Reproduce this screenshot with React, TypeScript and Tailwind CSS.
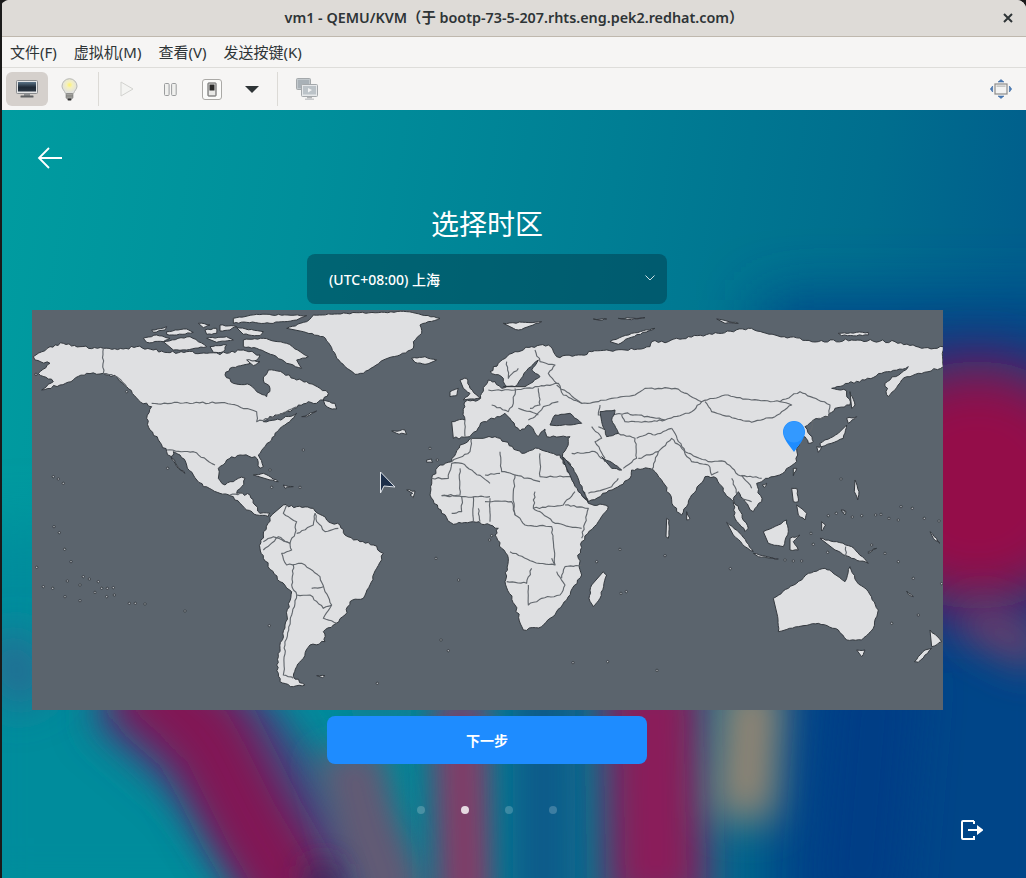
// App.tsx
import type { ReactNode } from "react";

const font = "font-['Noto_Sans','Noto_Sans_CJK_SC',sans-serif]";

// outlines are in 3x crop units, west part first, east part shifted by 1365
const westLand = [
  "10 155 60 125 100 115 150 125 220 130 280 132 320 125 370 135 420 143 470 140 530 145 590 145 640 135 690 150 680 165 640 180 600 190 585 210 610 235 660 240 690 265 710 275 720 250 700 225 715 195 760 205 800 225 830 230 870 250 895 265 880 285 860 295 835 290 805 300 780 320 735 330 700 350 735 345 760 340 800 325 780 350 750 370 735 385 725 405 700 430 685 450 700 485 690 490 675 455 630 450 590 465 565 490 565 520 585 540 610 530 625 520 645 520 635 545 620 565 660 570 675 600 690 625 720 625 715 635 680 630 650 615 610 575 570 565 520 545 490 510 470 480 450 450 430 440 425 460 465 505 440 485 410 440 385 405 360 375 350 340 365 305 325 285 290 245 260 215 220 205 170 205 130 225 90 240 35 255 70 230 25 205 60 175 15 165",
  "770 70 830 50 850 30 950 25 1130 20 1230 40 1170 60 1175 85 1150 110 1150 130 1110 150 1060 165 1000 205 975 208 945 185 920 160 900 120 880 95 820 80",
  "760 600 800 605 850 610 890 645 930 660 945 690 990 710 1030 720 1060 745 1040 790 1020 840 1000 880 960 890 945 930 910 960 880 980 885 1010 840 1020 820 1060 800 1085 790 1115 825 1140 790 1145 750 1130 740 1080 750 1030 765 960 785 860 750 830 700 760 690 730 700 690 725 630",
  "340 100 380 90 420 100 400 110 350 112", "365 75 410 65 405 75 370 82", "410 80 470 72 490 82 440 90 410 88",
  "400 110 480 95 530 125 470 135 430 135", "505 55 540 60 520 68", "525 75 560 70 560 85 530 88", "570 60 620 65 600 75 570 78",
  "610 40 680 28 830 32 800 45 720 55 650 52 610 55", "620 68 700 80 690 92 640 88", "530 100 590 95 610 105 560 112",
  "540 125 590 120 580 140 550 142", "640 105 700 100 770 115 835 155 800 165 815 190 770 175 730 150 680 130 640 125",
  "650 165 690 170 670 182", "880 285 915 295 920 312 900 310 885 300", "815 335 860 318 830 335", "1145 160 1185 155 1220 165 1185 178 1155 172",
  "1290 225 1310 220 1320 250 1350 280 1300 285 1320 265 1300 250", "1260 260 1285 250 1280 272 1260 275",
  "670 510 700 505 745 530 720 525", "760 540 790 545 765 550", "1190 465 1205 462 1208 472 1190 472", "1130 555 1155 558 1150 578 1140 570 1148 565",
  "860 1112 885 1112 878 1118", "1085 378 1125 375 1130 388 1100 385",
];

const eastLand = [
  "-40 400 -75 420 -100 470 -135 480 -160 520 -165 570 -130 625 -95 658 -35 650 15 660 40 670 30 690 50 730 70 760 60 830 90 900 115 975 170 965 210 930 245 885 290 810 280 760 290 710 340 650 370 605 310 595 280 550 245 490 225 450 160 430 110 445 60 410 30 395 -5 400",
  "-100 350 -60 345 -65 320 -60 290 -20 285 -10 265 10 225 30 230 50 250 65 245 55 220 15 200 40 175 90 140 140 125 190 120 215 155 290 150 320 140 420 135 495 125 500 110 550 110 610 95 700 85 790 70 870 90 1000 110 1100 105 1230 110 1310 130 1375 125 1375 185 1300 205 1250 225 1210 275 1200 235 1270 185 1190 205 1140 225 1090 235 1040 250 1085 258 1095 300 1050 310 1030 335 985 345 960 365 975 390 985 410 970 415 960 395 945 405 935 430 935 470 900 500 850 520 830 530 815 535 830 590 805 620 780 590 760 560 745 580 790 670 780 680 750 640 745 590 720 565 695 520 660 515 620 570 590 630 575 620 540 540 510 500 490 490 440 495 435 520 390 550 310 590 250 470 232 455 250 410 255 395 185 395 180 372 160 395 130 360 105 378 60 325 35 335 5 350 -5 350 -45 395 -95 400",
  "55 55 170 50 100 75 85 70", "375 110 440 85 510 70 430 100 400 118", "325 42 365 42 345 46", "400 40 480 38 440 44", "695 42 760 55 720 55", "1060 85 1150 82 1150 90 1070 92",
  "1095 260 1110 300 1100 310", "1085 340 1115 335 1090 355", "1085 360 1075 400 1010 425 1005 415 1060 385", "995 425 1010 425 1000 442",
  "925 490 935 490 925 512", "832 540 845 535 838 548", "920 550 935 550 940 590 925 590", "935 600 965 625 960 645 940 630",
  "835 680 880 660 905 645 910 680 895 725 850 715", "725 652 770 690 805 740 780 725 745 690", "805 745 880 762 820 755",
  "915 700 945 690 925 710 940 735 915 735", "1005 700 1055 710 1100 725 1150 775 1100 760 1050 735",
  "865 880 910 850 950 825 970 805 1020 790 1040 800 1080 830 1095 785 1115 830 1150 860 1180 915 1165 970 1130 1005 1085 1005 1060 975 1000 955 940 965 880 980 878 935",
  "1115 1035 1140 1035 1130 1055", "1335 975 1370 1010 1340 1025", "1340 1030 1300 1072 1288 1070 1320 1035",
  "355 800 365 810 345 880 325 905 312 880 320 840", "605 620 615 640 605 645", "545 640 552 645 550 700 543 695",
  "1110 525 1122 560 1118 585 1108 560", "1335 680 1365 715 1345 700", "1265 858 1285 875 1270 868", "1150 740 1175 730 1150 745",
  "1010 650 1022 660 1010 678", "1068 615 1082 618 1080 630",
];

const seas = [
  "195 360 210 330 255 325 290 355 250 360 215 362",
  "345 320 390 315 380 345 400 385 365 395 350 350",
  "55 245 90 245 130 190 160 165 140 195 165 215 120 245",
  "350 455 390 480 410 495 380 490",
  "232 455 265 490 310 590 280 560 245 490",
];

const westBorders = [
  "220 130 220 205 260 215 290 245", "365 295 585 293 680 320 680 350 735 335 770 320 800 305", "410 435 490 440 530 465 555 480",
  "600 570 640 565", "770 600 760 625 800 650 795 685 780 715 730 695 700 710", "855 625 860 650 885 680 925 670", "800 685 850 660 855 625",
  "700 735 745 695 780 715", "780 715 785 735 755 745 770 780 815 775 870 815 885 860 905 900 880 940 920 955", "790 780 785 840 800 870",
  "800 870 840 870 880 910 905 900", "845 850 880 845", "800 870 785 930 765 1020 760 1110 790 1120",
];

const eastBorders = [
  "-160 520 -110 520 -100 475 -70 475 15 535", "-75 490 -75 570 -130 572", "-40 400 -45 440 -100 470", "-130 572 -70 575 -30 575 15 575",
  "-70 575 -70 620 -100 625", "-35 575 -35 650", "-20 610 -15 650", "15 580 15 650", "45 440 50 500 90 510 85 560 90 630 105 640",
  "165 445 165 515 255 515", "90 510 165 530", "0 510 45 505", "0 590 80 590 90 630", "150 560 145 610 165 620 210 655 290 670",
  "270 560 235 600 145 610", "240 600 310 610 290 700", "105 640 120 660 200 665 205 710 210 780", "75 740 145 770 210 780 200 760",
  "65 830 125 835 140 790", "130 840 130 900 170 880 225 870 240 840 215 800", "290 780 240 785 230 820",
  "10 255 90 255 160 245 220 235 235 270 290 295", "90 250 85 295 70 320 20 300", "160 250 165 300 135 310", "65 170 70 220 100 190",
  "150 135 165 170 210 180 190 205 215 235", "220 290 175 305 150 335 130 345", "100 310 160 330", "-60 345 -60 395",
  "215 240 290 295 340 290 380 280 450 270 480 250 570 250 650 290 720 270 800 285 885 290 945 260 1000 285 1035 300 1030 335 1000 340",
  "660 290 680 320 750 340 800 352 870 335 920 300 885 290", "345 300 340 330 420 325 460 330 540 345 620 320 650 290",
  "320 365 350 400 330 410 360 460", "340 365 400 385 450 400 455 460 415 490", "410 330 420 350 500 350 540 345",
  "455 400 490 385 510 390 560 370", "500 495 520 440 560 400 590 430 620 470 670 480", "520 440 460 460", "260 445 330 440 360 470",
  "310 565 380 545 400 520", "560 370 600 440 670 470 720 470 760 510 830 520", "670 480 680 510 700 500", "740 520 760 580 800 590", "770 510 800 550",
  "985 345 975 380", "1082 725 1082 760",
];

const westDots = [
  [70, 515], [85, 522], [100, 535], [72, 665], [88, 683], [104, 733], [123, 770], [20, 787], [112, 828], [40, 845], [68, 850], [105, 875], [150, 887],
  [160, 815], [178, 822], [205, 830], [150, 840], [195, 862], [215, 850], [232, 850], [250, 848], [230, 875], [253, 870], [298, 895], [316, 895], [345, 897],
  [465, 918], [413, 490], [290, 260], [718, 962], [820, 435], [1200, 430], [1222, 465], [1218, 760], [1286, 825], [1233, 1005], [1255, 1037], [1042, 1135],
  [18, 208], [725, 547], [810, 547], [720, 495],
];

const eastDots = [
  [20, 692], [14, 705], [405, 733], [335, 770], [540, 752], [736, 791], [408, 865], [424, 860], [264, 1073], [368, 1070], [516, 1096], [1068, 522],
  [1030, 632], [1054, 625], [1075, 620], [1102, 636], [1130, 632], [1172, 630], [1188, 628], [1212, 640], [1240, 645], [1248, 605], [1282, 610], [1318, 640],
  [1362, 648], [1285, 820], [1370, 836], [1300, 930], [1220, 955], [978, 685], [985, 718], [1028, 742], [1160, 720], [1200, 745], [1240, 770], [900, 765], [925, 768], [950, 768],
];

// breaks long edges into short ragged steps so coasts don't look ruled
function rough(points: string, amp: number) {
  const n = points.split(" ").map(Number);
  const out: number[] = [];
  for (let i = 0; i + 3 < n.length; i += 2) {
    const [x0, y0, x1, y1] = [n[i], n[i + 1], n[i + 2], n[i + 3]];
    const len = Math.hypot(x1 - x0, y1 - y0);
    const steps = Math.max(1, Math.ceil(len / 10));
    out.push(x0, y0);
    for (let s = 1; s < steps; s++) {
      const t = s / steps;
      const px = x0 + (x1 - x0) * t;
      const py = y0 + (y1 - y0) * t;
      const h = Math.sin(px * 12.9898 + py * 78.233) * 43758.5453;
      const r = (h - Math.floor(h) - 0.5) * 2 * amp;
      out.push(px + (-(y1 - y0) / len) * r, py + ((x1 - x0) / len) * r);
    }
  }
  out.push(n[n.length - 2], n[n.length - 1]);
  return out.map((v) => v.toFixed(1)).join(" ");
}

function Land({ shapes, borders, dots }: { shapes: string[]; borders: string[]; dots: number[][] }) {
  return (
    <>
      {shapes.map((p) => (
        <polygon key={p} points={rough(p, p.length > 200 ? 4 : 2)} fill="#dfe0e2" stroke="#33383e" strokeWidth="3" strokeLinejoin="round" />
      ))}
      {borders.map((p) => (
        <polyline key={p} points={rough(p, 2.5)} fill="none" stroke="#62676d" strokeWidth="3.4" strokeLinejoin="round" />
      ))}
      {dots.map(([x, y]) => (
        <circle key={`${x}-${y}`} cx={x} cy={y} r="3.5" fill="#b9bdc2" stroke="#2c3137" strokeWidth="2.5" />
      ))}
    </>
  );
}

function WorldMap() {
  return (
    <svg viewBox="0 0 911 400" className="block h-[400px] w-[911px] shrink-0">
      <defs>
        <filter id="soft" filterUnits="userSpaceOnUse" x="-100" y="-100" width="4000" height="1600">
          <feGaussianBlur stdDeviation="0.9" />
        </filter>
        <clipPath id="mapClip">
          <rect width="911" height="400" />
        </clipPath>
      </defs>
      <rect width="911" height="400" fill="#5b646d" />
      <g clipPath="url(#mapClip)">
        <g transform="translate(-2 -5) scale(0.33333)" filter="url(#soft)">
          <Land shapes={westLand} borders={westBorders} dots={westDots} />
          <g transform="translate(1365 0)">
            <Land shapes={eastLand} borders={eastBorders} dots={eastDots} />
            {seas.map((p) => (
              <polygon key={p} points={rough(p, 2)} fill="#5b646d" stroke="#33383e" strokeWidth="3" strokeLinejoin="round" />
            ))}
          </g>
        </g>
        {/* pin */}
        <path d="M762 142 C768 134 773 128 773 122 A11 11 0 0 0 751 122 C751 128 756 134 762 142 Z" fill="#1e8cff" />
        <circle cx="762" cy="122" r="10.5" fill="#3399ff" />
        {/* pointer */}
        <path d="M348.5 162 L363 177 L352 176 L348.5 183 Z" fill="#1d2f4a" stroke="#dfe3e8" strokeWidth="1" strokeLinejoin="round" />
      </g>
    </svg>
  );
}

function Wallpaper() {
  return (
    <svg viewBox="0 0 1024 768" preserveAspectRatio="none" className="absolute inset-0 h-full w-full">
      <defs>
        <linearGradient id="sky" x1="0" y1="0" x2="1" y2="0.12">
          <stop offset="0" stopColor="#009ca0" />
          <stop offset="0.3" stopColor="#008f9b" />
          <stop offset="0.6" stopColor="#007e94" />
          <stop offset="0.85" stopColor="#006e8e" />
          <stop offset="1" stopColor="#005f8c" />
        </linearGradient>
        <filter id="b8" filterUnits="userSpaceOnUse" x="-200" y="-200" width="1500" height="1200"><feGaussianBlur stdDeviation="15" /></filter>
        <filter id="b14" filterUnits="userSpaceOnUse" x="-200" y="-200" width="1500" height="1200"><feGaussianBlur stdDeviation="20" /></filter>
        <filter id="b30" filterUnits="userSpaceOnUse" x="-200" y="-200" width="1500" height="1200"><feGaussianBlur stdDeviation="30" /></filter>
      </defs>
      <rect width="1024" height="768" fill="url(#sky)" />
      <rect x="-40" y="420" width="400" height="380" fill="#008c9c" filter="url(#b30)" />
      <rect x="760" y="190" width="320" height="640" fill="#004488" filter="url(#b30)" />
      <circle cx="975" cy="375" r="125" fill="#940848" filter="url(#b30)" />
      <path d="M965 505 L1040 545" stroke="#7a4068" strokeWidth="34" filter="url(#b14)" />
      <g fill="none" strokeLinecap="butt">
        <path d="M0 530 L30 590" stroke="#2a6a92" strokeWidth="50" filter="url(#b14)" />
        <path d="M130 560 L225 640 L340 800" stroke="#3d4a80" strokeWidth="130" filter="url(#b14)" />
        <path d="M130 560 L205 625 L250 715 L300 800" stroke="#821555" strokeWidth="84" filter="url(#b14)" />
        <path d="M345 640 L365 720 L395 800" stroke="#625a74" strokeWidth="66" filter="url(#b8)" />
        <path d="M318 755 L326 800" stroke="#3a2a58" strokeWidth="30" filter="url(#b8)" />
        <path d="M458 590 L464 800" stroke="#823c68" strokeWidth="56" filter="url(#b8)" />
        <path d="M370 560 L385 615" stroke="#0f8094" strokeWidth="60" filter="url(#b8)" />
        <path d="M542 570 L542 800" stroke="#0a5c8a" strokeWidth="62" filter="url(#b8)" />
        <path d="M650 560 L655 800" stroke="#8a1a5a" strokeWidth="100" filter="url(#b14)" />
        <path d="M752 570 L742 710" stroke="#988672" strokeWidth="60" filter="url(#b14)" />
        <path d="M875 560 L855 800" stroke="#023c86" strokeWidth="90" filter="url(#b14)" />
      </g>
    </svg>
  );
}

function Slot({ w, children }: { w: string; children: ReactNode }) {
  return <div className={`flex h-full shrink-0 items-center justify-center ${w}`}>{children}</div>;
}

function Separator() {
  return <div className="mx-0 h-[34px] w-px shrink-0 bg-[#dcdad6]" />;
}

function Toolbar() {
  return (
    <div className="flex h-[42px] shrink-0 items-center bg-[#f6f5f4] pl-1">
      <div className="flex h-[34px] w-[42px] shrink-0 items-center justify-center rounded-[6px] bg-[#d5d0cc]">
        <svg width="22" height="18" viewBox="0 0 22 18">
          <defs>
            <linearGradient id="scr" x1="0" y1="0" x2="0" y2="1">
              <stop offset="0" stopColor="#5b7488" />
              <stop offset="0.55" stopColor="#1f2a36" />
              <stop offset="1" stopColor="#2b3642" />
            </linearGradient>
          </defs>
          <rect x="0.5" y="0.5" width="21" height="13" rx="1" fill="#e4e5e6" stroke="#8a8c8e" />
          <rect x="2" y="2" width="18" height="9.5" fill="url(#scr)" />
          <rect x="8" y="14" width="6" height="2" fill="#8d8f91" />
          <rect x="4.5" y="15.5" width="13" height="2" rx="0.5" fill="#5f6163" />
        </svg>
      </div>
      <Slot w="w-[42px]">
        <svg width="17" height="23" viewBox="0 0 17 23">
          <defs>
            <radialGradient id="glow" cx="0.5" cy="0.42" r="0.5">
              <stop offset="0" stopColor="#fff36a" />
              <stop offset="0.4" stopColor="#f4f0c0" />
              <stop offset="1" stopColor="#e2e2de" />
            </radialGradient>
          </defs>
          <path d="M8.5 .7 A7.6 7.6 0 0 1 16 8.2 C16 11 13.6 12.5 12.5 15.5 L4.5 15.5 C3.4 12.5 1 11 1 8.2 A7.6 7.6 0 0 1 8.5 .7 Z" fill="url(#glow)" stroke="#b5b6b1" />
          <rect x="5" y="15.5" width="7" height="5" rx="1" fill="#b0b0ac" stroke="#777" strokeWidth=".6" />
          <path d="M5 17.2 H12 M5 18.9 H12" stroke="#6e6e6c" strokeWidth=".7" />
          <rect x="6.5" y="20.6" width="4" height="2" rx=".8" fill="#2f2f2f" />
        </svg>
      </Slot>
      <Slot w="w-[8px]"><span /></Slot>
      <Separator />
      <Slot w="w-[56px]">
        <svg width="14" height="16" viewBox="0 0 14 16">
          <path d="M1 1 L13 8 L1 15 Z" fill="#f4f4f2" stroke="#d2d2cf" />
        </svg>
      </Slot>
      <Slot w="w-[30px]">
        <svg width="13" height="13" viewBox="0 0 13 13">
          <rect x=".5" y=".5" width="4.6" height="12" rx="1" fill="#f0f0ee" stroke="#9b9d9e" />
          <rect x="7.6" y=".5" width="4.6" height="12" rx="1" fill="#f0f0ee" stroke="#9b9d9e" />
        </svg>
      </Slot>
      <Slot w="w-[54px]">
        <svg width="20" height="21" viewBox="0 0 20 21">
          <rect x=".5" y=".5" width="19" height="20" rx="2.5" fill="#fbfbfa" stroke="#aaa9a6" />
          <rect x="6" y="4" width="8" height="13" rx=".5" fill="#e9e9e7" stroke="#555" />
          <rect x="7.5" y="5.5" width="5" height="6" fill="#2a2a2a" />
        </svg>
      </Slot>
      <Slot w="w-[26px]">
        <svg width="14" height="7" viewBox="0 0 14 7">
          <path d="M0 0 H14 L7 7 Z" fill="#2e3436" />
        </svg>
      </Slot>
      <Slot w="w-[12px]"><span /></Slot>
      <Separator />
      <Slot w="w-[58px]">
        <svg width="22" height="22" viewBox="0 0 22 22">
          <rect x=".5" y=".5" width="14" height="11" rx="1" fill="#c2c8cc" stroke="#a4a8ab" />
          <rect x="2" y="2" width="11" height="8" fill="#a9b1b7" />
          <rect x="5.5" y="6.5" width="16" height="12" rx="1" fill="#e6e8ea" stroke="#a4a8ab" />
          <rect x="7" y="8" width="13" height="8.5" fill="#bcc3c8" />
          <path d="M12 10 L16 12 L12 14.5 Z" fill="#f2f3f4" />
          <rect x="11" y="19" width="5" height="1.5" fill="#b2b4b6" />
          <rect x="9" y="20.5" width="9" height="1.5" fill="#c8cacc" />
        </svg>
      </Slot>
      <div className="flex-1" />
      <div className="mr-[14px] flex h-full items-center">
        <svg width="22" height="20" viewBox="0 0 22 20">
          <g fill="#4f7fb8" stroke="#2f5f9c" strokeWidth=".5">
            <path d="M8 3 L11 .5 L14 3 Z" />
            <path d="M8 17 L11 19.5 L14 17 Z" />
            <path d="M2.6 7 L.3 10 L2.6 13 Z" />
            <path d="M19.4 7 L21.7 10 L19.4 13 Z" />
          </g>
          <rect x="5" y="5" width="12" height="10" fill="#f3f3f2" stroke="#8c8c8a" strokeWidth="1.2" />
          <rect x="6.5" y="6.5" width="9" height="1.3" fill="#bcbcba" />
        </svg>
      </div>
    </div>
  );
}

export default function App() {
  return (
    <div className={`flex h-[878px] w-[1026px] overflow-hidden bg-[#1a1a1a] ${font}`}>
      <div className="flex w-full flex-col overflow-hidden rounded-t-[9px] bg-[#f6f5f4] pl-[2px] [background-clip:content-box]">
        {/* title bar */}
        <div className="relative flex h-[37px] shrink-0 items-center justify-center border-b border-[#bfb8ae] bg-[#dedbd7] text-[14.35px] font-semibold text-[#2e3436]">
          vm1 - QEMU/KVM（于 bootp-73-5-207.rhts.eng.pek2.redhat.com）
          <svg width="10" height="10" viewBox="0 0 10 10" className="absolute right-[13px] top-[13px]">
            <path d="M1 1 L9 9 M9 1 L1 9" stroke="#2e3436" strokeWidth="2" />
          </svg>
        </div>
        {/* menu bar */}
        <div className="flex h-[31px] shrink-0 items-center gap-[17px] border-b border-[#deddda] pl-2 text-[15px] text-[#2e3436]">
          <span>文件(F)</span>
          <span>虚拟机(M)</span>
          <span>查看(V)</span>
          <span>发送按键(K)</span>
        </div>
        <Toolbar />
        {/* guest screen */}
        <div className="relative flex flex-1 flex-col overflow-hidden">
          <Wallpaper />
          <div className="relative flex w-[970px] flex-1 flex-col items-center">
            <div className="flex h-[97px] w-full items-center pl-[34px] pt-[0px]">
              <svg width="28" height="24" viewBox="0 0 28 24" className="mt-[-1px]">
                <path d="M26 12 H3 M13 2 L3 12 L13 22" fill="none" stroke="#fff" strokeWidth="1.8" />
              </svg>
            </div>
            <h1 className="text-[28px] font-normal leading-[34px] text-white">选择时区</h1>
            <div className="mt-[13px] flex h-[50px] w-[360px] shrink-0 items-center justify-between rounded-[8px] bg-[#003c4c]/50 pl-[22px] pr-[12px] text-[14px] font-medium text-white">
              <span>(UTC+08:00) 上海</span>
              <svg width="10" height="6" viewBox="0 0 10 6" className="mt-[-3px]">
                <path d="M.5 .5 L5 5 L9.5 .5" fill="none" stroke="#cfe0e4" strokeWidth="1" />
              </svg>
            </div>
            <div className="mt-[6px]">
              <WorldMap />
            </div>
            <button className="mt-[6px] h-[48px] w-[320px] shrink-0 rounded-[8px] bg-[#1e8cff] text-[14px] font-bold text-white">下一步</button>
            <div className="mt-[42px] flex items-center gap-[36px]">
              <span className="h-2 w-2 rounded-full bg-white/20" />
              <span className="h-2 w-2 rounded-full bg-white/80" />
              <span className="h-2 w-2 rounded-full bg-white/20" />
              <span className="h-2 w-2 rounded-full bg-white/20" />
            </div>
          </div>
          <svg width="22" height="20" viewBox="0 0 22 20" className="absolute bottom-[38px] right-[43px]">
            <path d="M13 1 H2 A1 1 0 0 0 1 2 V18 A1 1 0 0 0 2 19 H13 V16 M13 4 V1" fill="none" stroke="#fff" strokeWidth="2" />
            <path d="M7 10 H18 M17 7 L21 10 L17 13 Z" fill="#fff" stroke="#fff" strokeWidth="2" />
          </svg>
        </div>
      </div>
    </div>
  );
}
